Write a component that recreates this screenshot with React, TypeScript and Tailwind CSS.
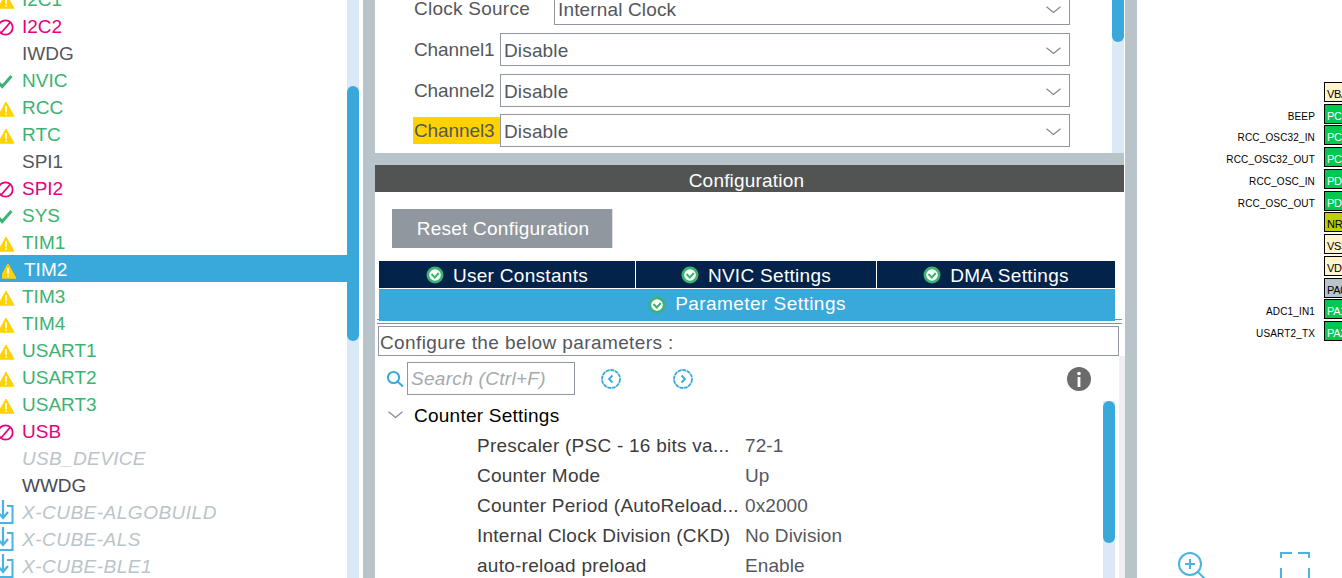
type Status = 'warn' | 'ban' | 'ok' | 'none' | 'cube'

interface Peripheral {
  name: string
  status: Status
  color: string
  active?: boolean
}

const GREEN = 'text-[#3cb371]'
const PINK = 'text-[#e6007e]'
const DARK = 'text-[#54575c]'
const MUTED = 'text-[#b9c4ca] italic tracking-[0.35px]'
const CUBE = 'text-[#b9c4ca] italic tracking-[0.5px]'

const peripherals: Peripheral[] = [
  { name: 'I2C1', status: 'warn', color: GREEN },
  { name: 'I2C2', status: 'ban', color: PINK },
  { name: 'IWDG', status: 'none', color: DARK },
  { name: 'NVIC', status: 'ok', color: GREEN },
  { name: 'RCC', status: 'warn', color: GREEN },
  { name: 'RTC', status: 'warn', color: GREEN },
  { name: 'SPI1', status: 'none', color: DARK },
  { name: 'SPI2', status: 'ban', color: PINK },
  { name: 'SYS', status: 'ok', color: GREEN },
  { name: 'TIM1', status: 'warn', color: GREEN },
  { name: 'TIM2', status: 'warn', color: 'text-white', active: true },
  { name: 'TIM3', status: 'warn', color: GREEN },
  { name: 'TIM4', status: 'warn', color: GREEN },
  { name: 'USART1', status: 'warn', color: GREEN },
  { name: 'USART2', status: 'warn', color: GREEN },
  { name: 'USART3', status: 'warn', color: GREEN },
  { name: 'USB', status: 'ban', color: PINK },
  { name: 'USB_DEVICE', status: 'none', color: MUTED },
  { name: 'WWDG', status: 'none', color: 'text-[#4a4a4f]' },
  { name: 'X-CUBE-ALGOBUILD', status: 'cube', color: CUBE },
  { name: 'X-CUBE-ALS', status: 'cube', color: CUBE },
  { name: 'X-CUBE-BLE1', status: 'cube', color: CUBE },
]

const pins = [
  { label: '', pin: 'VBAT', cls: 'bg-[#fff4cc] text-black' },
  { label: 'BEEP', pin: 'PC13', cls: 'bg-[#00c850] text-white' },
  { label: 'RCC_OSC32_IN', pin: 'PC14', cls: 'bg-[#00c850] text-white' },
  { label: 'RCC_OSC32_OUT', pin: 'PC15', cls: 'bg-[#00c850] text-white' },
  { label: 'RCC_OSC_IN', pin: 'PD0', cls: 'bg-[#00c850] text-white' },
  { label: 'RCC_OSC_OUT', pin: 'PD1', cls: 'bg-[#00c850] text-white' },
  { label: '', pin: 'NRST', cls: 'bg-[#bccf00] text-black' },
  { label: '', pin: 'VSSA', cls: 'bg-[#fff4cc] text-black' },
  { label: '', pin: 'VDDA', cls: 'bg-[#fff4cc] text-black' },
  { label: '', pin: 'PA0', cls: 'bg-[#b9c4ca] text-black' },
  { label: 'ADC1_IN1', pin: 'PA1', cls: 'bg-[#00c850] text-white' },
  { label: 'USART2_TX', pin: 'PA2', cls: 'bg-[#00c850] text-white' },
]

const params = [
  ['Prescaler (PSC - 16 bits va...', '72-1'],
  ['Counter Mode', 'Up'],
  ['Counter Period (AutoReload...', '0x2000'],
  ['Internal Clock Division (CKD)', 'No Division'],
  ['auto-reload preload', 'Enable'],
]

function StatusIcon({ status }: { status: Status }) {
  if (status === 'warn') {
    return (
      <svg width="16" height="16" viewBox="0 0 16 16" className="shrink-0">
        <path d="M6 1 L14 15.2 L-2 15.2 Z" fill="#ffd200" stroke="#ffd200" strokeLinejoin="round" />
        <rect x="5.2" y="5" width="1.6" height="6.2" fill="#fff" />
        <rect x="5.2" y="12.2" width="1.6" height="1.6" fill="#fff" />
      </svg>
    )
  }
  if (status === 'ban') {
    return (
      <svg width="16" height="17" viewBox="0 0 16 17" className="shrink-0">
        <circle cx="5.5" cy="8.5" r="7.2" fill="none" stroke="#e6007e" strokeWidth="1.8" />
        <path d="M1 14 L10.5 3" stroke="#e6007e" strokeWidth="1.8" />
      </svg>
    )
  }
  if (status === 'ok') {
    return (
      <svg width="16" height="16" viewBox="0 0 16 16" className="shrink-0">
        <path d="M-2 8 L2.2 12.6 L11.5 2" fill="none" stroke="#3cb371" strokeWidth="3" />
      </svg>
    )
  }
  if (status === 'cube') {
    return (
      <svg width="16" height="28" viewBox="0 0 16 28" className="shrink-0">
        <path d="M7 6 H12.5 V23 H-1" fill="none" stroke="#4cb2e2" strokeWidth="2" />
        <path d="M3 0 V17 M-2 12 L3 18 L8 12" fill="none" stroke="#4cb2e2" strokeWidth="2.2" />
      </svg>
    )
  }
  return <span className="w-4 shrink-0" />
}

function Chevron({ className }: { className?: string }) {
  return (
    <svg width="15" height="8" viewBox="0 0 15 8" className={`shrink-0 ${className ?? ''}`}>
      <path d="M0.5 0.8 L7.5 6.5 L14.5 0.8" fill="none" stroke="#83888c" strokeWidth="1.2" />
    </svg>
  )
}

function TabCheck() {
  return (
    <svg width="18" height="18" viewBox="0 0 18 18" className="shrink-0">
      <circle cx="9" cy="9" r="8.5" fill="#3cb371" />
      <circle cx="9" cy="9" r="5.8" fill="#fff" />
      <path d="M5.5 8 L8.8 11.5 L12.8 7" fill="none" stroke="#3cb371" strokeWidth="2" />
    </svg>
  )
}

function ArrowCircle({ dir }: { dir: 'left' | 'right' }) {
  return (
    <svg width="22" height="22" viewBox="0 0 22 22">
      <circle cx="11" cy="11" r="9" fill="none" stroke="#39a9dc" strokeWidth="1.8" strokeDasharray="4 0.6" />
      <path
        d={dir === 'left' ? 'M12.5 7.5 L9 11 L12.5 14.5' : 'M9.5 7.5 L13 11 L9.5 14.5'}
        fill="none"
        stroke="#39a9dc"
        strokeWidth="1.8"
      />
    </svg>
  )
}

function SelectRow({
  label,
  value,
  highlight,
  wide,
  className,
}: {
  label: string
  value: string
  highlight?: boolean
  wide?: boolean
  className?: string
}) {
  return (
    <div className={`flex items-center h-[33px] pl-[38px] shrink-0 ${className ?? ''}`}>
      <span
        className={`${wide ? 'w-[141px] tracking-[0.25px]' : 'w-[87px] tracking-[-0.1px]'} h-[27px] leading-[27px] shrink-0 whitespace-nowrap ${highlight ? 'bg-[#ffd200]' : ''}`}
      >
        <span className="pl-[1px]">{label}</span>
      </span>
      <div className="flex-1 h-[33px] mr-[42px] border border-[#90979e] flex items-center justify-between pl-[3px] pr-[8px] tracking-[0.15px]">
        <span className="pt-[3px]">{value}</span>
        <Chevron className="mt-[3px]" />
      </div>
    </div>
  )
}

export default function App() {
  return (
    <div className="w-[1342px] h-[578px] overflow-hidden flex bg-white text-[19px] text-[#54575c] font-['Liberation_Sans',Arial,sans-serif]">
      {/* peripheral list */}
      <div className="w-[347px] shrink-0 overflow-hidden">
        <div className="-mt-[15px]">
          {peripherals.map((p) => (
            <div
              key={p.name}
              className={`h-[27px] flex items-center gap-[6px] pt-[4px] ${p.active ? 'bg-[#39a9dc] pl-[2px]' : ''} ${p.color}`}
            >
              <StatusIcon status={p.status} />
              <span>{p.name}</span>
            </div>
          ))}
        </div>
      </div>
      <div className="w-[12px] shrink-0 bg-[#dbe8f5]">
        <div className="mt-[86px] h-[255px] rounded-[6px] bg-[#39a9dc]" />
      </div>
      <div className="w-[4px] shrink-0" />
      <div className="w-[12px] shrink-0 bg-[#b9c4ca]" />

      {/* centre column */}
      <div className="w-[750px] shrink-0 flex flex-col">
        <div className="w-[749px] shrink-0">
          <div className="h-[153px] flex overflow-hidden">
            <div className="flex-1 -mt-[8px] flex flex-col">
              <SelectRow label="Clock Source" value="Internal Clock" wide />
              <SelectRow label="Channel1" value="Disable" className="mt-[8px]" />
              <SelectRow label="Channel2" value="Disable" className="mt-[8px]" />
              <SelectRow label="Channel3" value="Disable" highlight className="mt-[7px]" />
            </div>
            <div className="w-[12px] shrink-0 bg-[#dbe8f5]">
              <div className="h-[42px] rounded-b-[6px] bg-[#39a9dc]" />
            </div>
          </div>
          <div className="h-[12px] bg-[#b9c4ca]" />
          <div className="h-[27px] bg-[#525454] text-white flex items-center justify-center pr-[6px] pt-[5px] tracking-[0.2px]">
            Configuration
          </div>
        </div>

        <div className="flex-1 min-h-0 pt-[17px] pl-[4px] flex flex-col">
          <div className="ml-[13px] w-[221px] h-[39px] shrink-0 bg-[#90979e] border-r border-[#dde1e4] text-white flex items-center justify-center pl-[2px] pt-[2px] tracking-[0.25px]">
            Reset Configuration
          </div>

          <div className="mt-[13px] w-[736px] h-[27px] shrink-0 bg-[#03234b] text-white flex tracking-[0.3px]">
            <div className="w-[257px] border-r border-white flex items-center justify-center gap-[9px]">
              <TabCheck />
              <span className="pt-[3px]">User Constants</span>
            </div>
            <div className="w-[241px] border-r border-white flex items-center justify-center gap-[9px]">
              <TabCheck />
              <span className="pt-[3px]">NVIC Settings</span>
            </div>
            <div className="flex-1 flex items-center justify-center gap-[9px]">
              <TabCheck />
              <span className="pt-[3px]">DMA Settings</span>
            </div>
          </div>
          <div className="relative mt-[1px] w-[736px] h-[32px] shrink-0 bg-[#39a9dc] text-white flex items-center justify-center gap-[9px] tracking-[0.45px]">
            <TabCheck />
            <span className="-mt-[2px]">Parameter Settings</span>
            <div className="absolute -left-[2px] bottom-[1px] w-[2px] h-[1px] bg-[#39a9dc]" />
            <div className="absolute -right-[7px] bottom-[1px] w-[7px] h-[1px] bg-[#39a9dc]" />
          </div>
          <div className="mt-[2px] -ml-[2px] w-[745px] h-[1px] shrink-0 bg-[#39a9dc]" />

          <div className="mt-[2px] -ml-[1px] w-[741px] h-[30px] shrink-0 border border-[#90979e] flex items-center pl-[1px] pt-[4px] tracking-[0.4px]">
            Configure the below parameters :
          </div>

          <div className="flex flex-1 min-h-0 overflow-hidden">
            <div className="w-[724px] shrink-0">
              <div className="mt-[6px] flex items-center h-[33px]">
                <svg width="18" height="18" viewBox="0 0 18 18" className="ml-[7px] shrink-0">
                  <circle cx="7.5" cy="7.5" r="5.6" fill="none" stroke="#39a9dc" strokeWidth="2" />
                  <path d="M11.5 11.5 L17 16.5" stroke="#39a9dc" strokeWidth="2" />
                </svg>
                <div className="ml-[3px] w-[168px] h-[33px] border border-[#90979e] flex items-center pl-[3px] pt-[2px] italic text-[#a5aaae] tracking-[0.3px]">
                  Search (Ctrl+F)
                </div>
                <div className="ml-[25px]">
                  <ArrowCircle dir="left" />
                </div>
                <div className="ml-[50px]">
                  <ArrowCircle dir="right" />
                </div>
                <svg width="24" height="24" viewBox="0 0 24 24" className="ml-[373px] shrink-0">
                  <circle cx="12" cy="12" r="12" fill="#6b6b6b" />
                  <circle cx="12" cy="6.5" r="1.8" fill="#fff" />
                  <rect x="10.6" y="10" width="2.8" height="10" fill="#fff" />
                </svg>
              </div>

              <div className="mt-[5px] h-[30px] flex items-center text-black tracking-[0.24px]">
                <Chevron className="ml-[9px]" />
                <span className="ml-[11px] pt-[3px]">Counter Settings</span>
              </div>
              {params.map(([name, value]) => (
                <div key={name} className="h-[30px] flex items-center pt-[3px] tracking-[0.25px]">
                  <span className="ml-[98px] w-[268px] shrink-0 text-[#3c3c3c] whitespace-nowrap">{name}</span>
                  <span className="tracking-[0.1px]">{value}</span>
                </div>
              ))}
            </div>
            <div className="mt-[45px] w-[12px] shrink-0 bg-[#dbe8f5]">
              <div className="h-[142px] rounded-[6px] bg-[#39a9dc]" />
            </div>
            <div className="w-[4px] shrink-0" />
            <div className="w-[6px] shrink-0 bg-[#eef0f4]" />
          </div>
        </div>
      </div>

      <div className="w-[12px] shrink-0 bg-[#b9c4ca]" />

      {/* chip view */}
      <div className="flex-1 relative overflow-hidden">
        <div className="pt-[82px] flex flex-col gap-[2px] items-end">
          {pins.map((p) => (
            <div key={p.pin} className="h-[19.75px] w-[205px] flex justify-end items-center">
              <span className="text-[10px] text-black tracking-[0.15px] mr-[9px] pt-[5px] whitespace-nowrap">{p.label}</span>
              <div className={`w-[19px] -mr-[1px] h-[20px] shrink-0 border border-black overflow-hidden whitespace-nowrap text-[11px] leading-[18px] pl-[2px] pt-[2px] tracking-[-0.3px] ${p.cls}`}>
                {p.pin}
              </div>
            </div>
          ))}
        </div>
        <svg width="30" height="30" viewBox="0 0 30 30" className="absolute left-[40px] top-[550px]">
          <circle cx="13" cy="14" r="11" fill="none" stroke="#4cb2e2" strokeWidth="2" />
          <path d="M13 9 V19 M8 14 H18" stroke="#4cb2e2" strokeWidth="2" />
          <path d="M21 22 L28 29" stroke="#4cb2e2" strokeWidth="2" />
        </svg>
        <svg width="30" height="30" viewBox="0 0 30 30" className="absolute left-[143px] top-[550px]">
          <path d="M1 8 V3 H12 M18 3 H29 V8 M1 18 V28 M29 18 V28" fill="none" stroke="#4cb2e2" strokeWidth="2" />
        </svg>
      </div>
    </div>
  )
}
